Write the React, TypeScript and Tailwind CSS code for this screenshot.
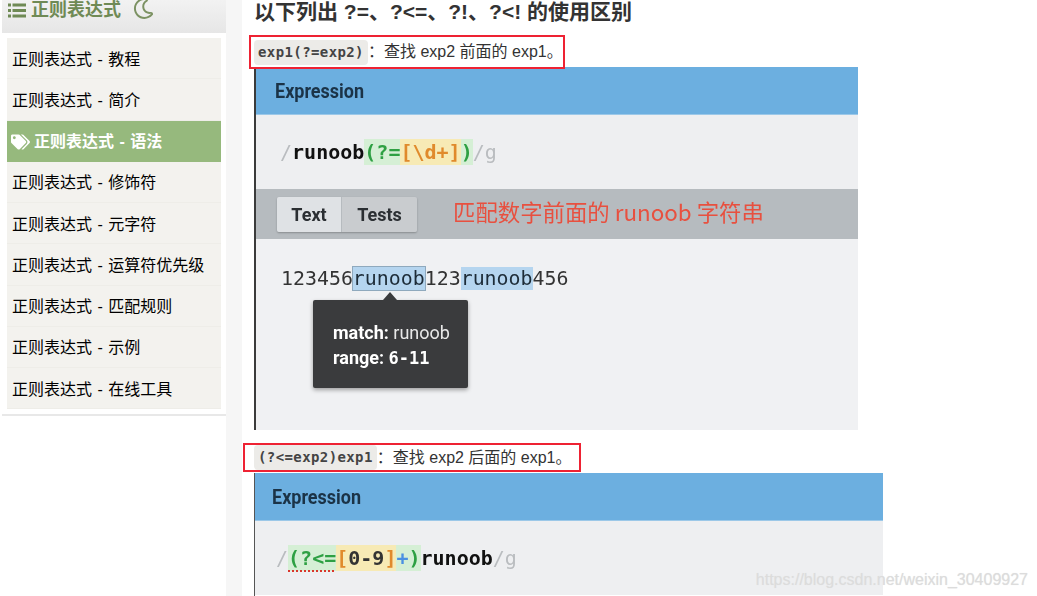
import { FaRegMoon, FaTags } from "react-icons/fa";

const items = ["教程", "简介", "语法", "修饰符", "元字符", "运算符优先级", "匹配规则", "示例", "在线工具"];

function ListIcon() {
  return (
    <svg viewBox="0 0 18 15" className="w-[18px] h-[15px] mr-[5px] fill-[#6f8a55]">
      <rect x="0" y="0.5" width="3" height="3" />
      <rect x="4.5" y="0.5" width="13.5" height="3" />
      <rect x="0" y="6" width="3" height="3" />
      <rect x="4.5" y="6" width="13.5" height="3" />
      <rect x="0" y="11.5" width="3" height="3" />
      <rect x="4.5" y="11.5" width="13.5" height="3" />
    </svg>
  );
}

function Sidebar() {
  return (
    <aside className="w-[226px] shrink-0 bg-white flex flex-col">
      <div className="ml-[2px] h-[33px] bg-gradient-to-b from-[#f2f2f2] to-[#e6e6e6] flex items-center pl-[6px] pb-[13px] text-[#6f8a55] text-[18px] leading-none font-bold">
        <ListIcon />
        <span>正则表达式</span>
        <FaRegMoon className="w-[21px] h-[21px] ml-[12px] -mt-[4px] text-[#7c9263]" />
      </div>
      <ul className="mt-[5px] ml-[7px] mr-[5px] bg-[#f3f2ee] text-[16px] text-black [word-spacing:1px]">
        {items.map((item) =>
          item === "语法" ? (
            <li key={item} className="h-[41.25px] pt-[1px] bg-[#96b97d] text-white font-bold flex items-center pl-[4px]">
              <FaTags className="w-[19px] h-[16px] mr-[4px]" />
              正则表达式 - {item}
            </li>
          ) : (
            <li key={item} className="h-[41.25px] pt-[3px] border-b border-[#eeede8] flex items-center pl-[5px]">
              正则表达式 - {item}
            </li>
          )
        )}
      </ul>
      <div className="ml-[2px] mt-[5px] h-[2px] bg-[#e8e8e8]" />
    </aside>
  );
}

function Code({ children }: { children: string }) {
  return (
    <code className="shrink-0 whitespace-nowrap bg-[#ecebe8] text-[#444] rounded-[4px] px-[4px] h-[25px] flex items-center font-['DejaVu_Sans_Mono',monospace] font-bold text-[14px] tracking-[0.4px]">
      {children}
    </code>
  );
}

function Expression({ children, inset }: { children: React.ReactNode; inset: string }) {
  return (
    <>
      <div className={`h-[48px] bg-[#6cafe0] border-b border-[#9cc8e8] flex items-center font-['Roboto',sans-serif] font-bold text-[20px] text-[#1b3347] ${inset}`}>
        <span className="inline-block origin-left scale-x-[0.9] scale-y-[1.05]">Expression</span>
      </div>
      <div className="h-[74px] bg-[#eeeff1] flex items-center pl-[24px] font-['DejaVu_Sans_Mono',monospace] font-bold text-[20px] leading-[26px] text-[#111]">
        {children}
      </div>
    </>
  );
}

function FirstShot() {
  return (
    <div className="w-[604px] h-[363px] -mt-[2px] border-l-2 border-[#3b3b3b] relative blur-[0.3px]">
      <Expression inset="pl-[19px]">
        <span className="text-[#b9bcbf] font-normal">/</span>
        <span>runoob</span>
        <span className="bg-[#d5efd5] text-[#2ea043]">(?=</span>
        <span className="bg-[#f7eab5] text-[#e08a2c]">[\d+]</span>
        <span className="bg-[#d5efd5] text-[#2ea043]">)</span>
        <span className="text-[#b9bcbf] font-normal">/g</span>
      </Expression>
      <div className="h-[50px] bg-[#b6bbbf] flex items-center pl-[21px]">
        <div className="flex h-[35px] rounded-[2px] shadow-[0_1px_2px_rgba(0,0,0,0.25)] font-['Roboto',sans-serif] font-bold text-[18px] text-[#2b2f33]">
          <span className="w-[64px] bg-[#dfe2e5] flex items-center justify-center rounded-l-[2px]">Text</span>
          <span className="w-[75px] ml-[1px] bg-[#c9cccf] flex items-center justify-center rounded-r-[2px]">Tests</span>
        </div>
        <span className="ml-[36px] -mt-[4px] font-['Noto_Sans_CJK_SC',sans-serif] text-[22.4px] text-[#e8503f]">匹配数字前面的 runoob 字符串</span>
      </div>
      <div className="h-[191px] bg-[#f0f1f3] pt-[26px] pl-[25px] font-['DejaVu_Sans_Mono',monospace] text-[19.9px] leading-[27px] text-[#333] relative">
        123456
        <span className="bg-[#b5d5ef] outline outline-1 outline-[#8fa9bd] text-[#1d2c38]">runoob</span>
        123
        <span className="bg-[#b5d5ef] text-[#1d2c38]">runoob</span>
        456
        <div className="absolute left-[57px] top-[61px] w-[155px] h-[88px] bg-[#3a3b3d] rounded-[2px] shadow-[0_2px_4px_rgba(0,0,0,0.35)] pl-[20px] pt-[20px] font-['Roboto',sans-serif] text-[18px] leading-[25px] text-[#e8e8e8]">
          <div className="absolute -top-[8px] left-[70px] w-0 h-0 border-x-[7px] border-x-transparent border-b-[8px] border-b-[#3a3b3d]" />
          <div>
            <b className="text-white">match:</b> runoob
          </div>
          <div className="font-bold text-white">
            range: <span className="font-['DejaVu_Sans_Mono',monospace] text-[17px]">6-11</span>
          </div>
        </div>
      </div>
    </div>
  );
}

function SecondShot() {
  return (
    <div className="w-[629px] h-[123px] border-l border-[#555] blur-[0.3px]">
      <Expression inset="pl-[17px]">
        <span className="text-[#b9bcbf] font-normal -ml-[3px]">/</span>
        <span className="bg-[#d5efd5] text-[#2ea043] underline decoration-dotted decoration-[#d9362b] decoration-2 underline-offset-[5px]">(?&lt;=</span>
        <span className="bg-[#f7eab5] text-[#e08a2c]">[<span className="text-[#333]">0-9</span>]</span>
        <span className="bg-[#d5efd5] text-[#4a90e2]">+</span>
        <span className="bg-[#d5efd5] text-[#2ea043]">)</span>
        <span>runoob</span>
        <span className="text-[#b9bcbf] font-normal">/g</span>
      </Expression>
    </div>
  );
}

export default function App() {
  return (
    <div className="relative w-[1037px] h-[596px] overflow-hidden flex bg-white font-['Liberation_Sans','Noto_Sans_CJK_SC',sans-serif]">
      <Sidebar />
      <div className="w-[16px] shrink-0 bg-[#f6f6f6]" />
      <main className="flex-1 pl-[12px]">
        <h2 className="h-[24px] flex items-center text-[21px] font-bold text-[#333] whitespace-nowrap">
          以下列出 ?=、?&lt;=、?!、?&lt;! 的使用区别
        </h2>
        <div className="mt-[11px] -ml-[5px] w-[316px] h-[34px] border-2 border-[#ee2233] flex items-center pl-[3px] text-[16px] text-[#333] relative z-10">
          <Code>exp1(?=exp2)</Code>
          <span className="whitespace-pre">：查找 exp2 前面的 exp1。</span>
        </div>
        <FirstShot />
        <div className="mt-[13px] -ml-[11px] w-[338px] h-[29px] border-2 border-[#ee2233] flex items-center pl-[9px] text-[16px] text-[#333]">
          <Code>(?&lt;=exp2)exp1</Code>
          <span className="whitespace-pre">：查找 exp2 后面的 exp1。</span>
        </div>
        <div className="mt-[1px]">
          <SecondShot />
        </div>
      </main>
      <span className="absolute right-[9px] top-[568px] font-['Liberation_Sans',sans-serif] text-[16px] text-[#dcdcdc] [text-shadow:0_0_1px_#e4e4e4]">
        https://blog.csdn.net/weixin_30409927
      </span>
    </div>
  );
}
